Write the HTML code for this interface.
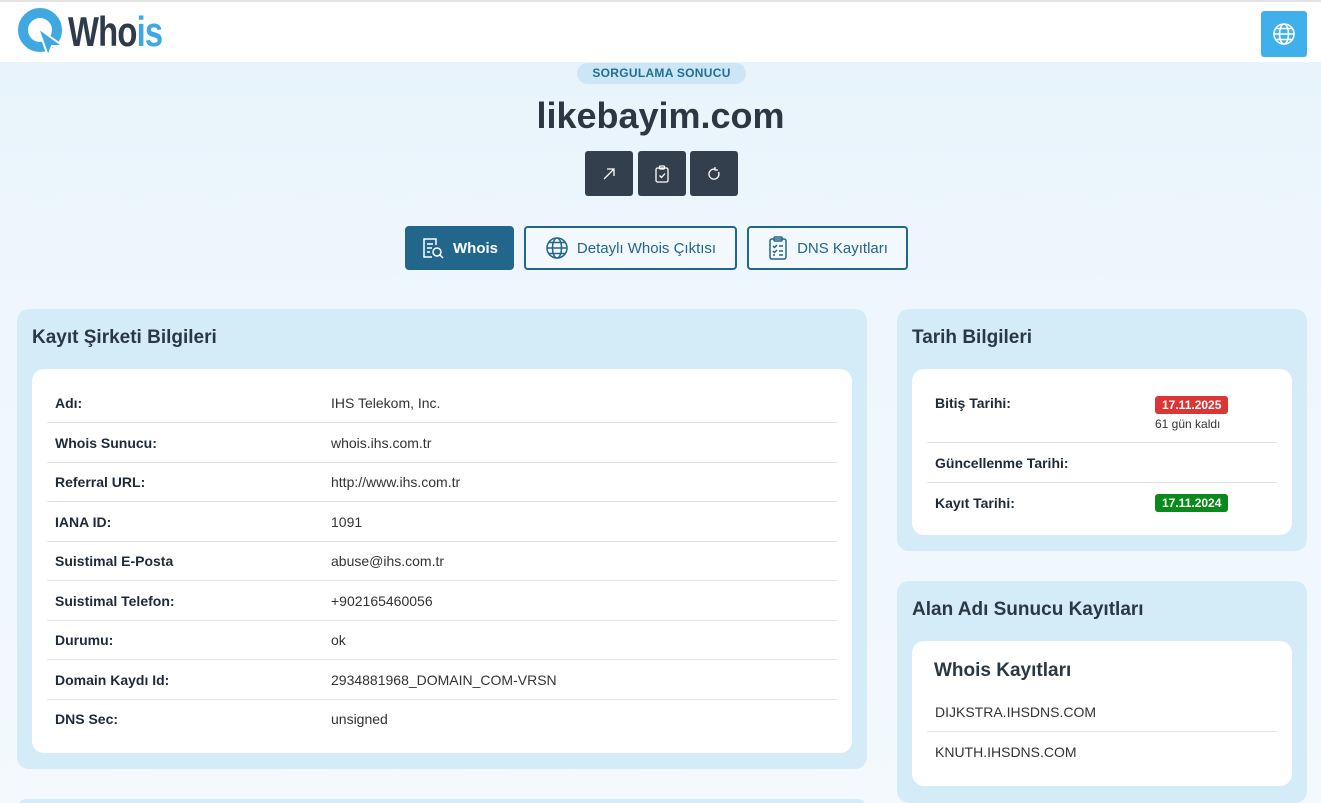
<!DOCTYPE html>
<html><head><meta charset="utf-8"><style>
*{margin:0;padding:0;box-sizing:border-box}
html{height:803px;overflow:hidden}
body{width:1321px;height:803px;overflow:hidden;font-family:"Liberation Sans",sans-serif;background:linear-gradient(180deg,#e6f2fa 0,#eef7fd 300px,#f3f9fd 803px);position:relative;color:#1f2937}
.hdr{position:absolute;left:0;top:0;width:1321px;height:62px;background:#fff;border-top:2px solid #e3e3e3}
.logo{position:absolute;left:18px;top:6px}
.logo span{position:absolute;left:50px;top:0px;font-size:42px;font-weight:bold;letter-spacing:-1px;color:#2f3b4a;transform:scaleX(.78);transform-origin:left}
.gbtn{position:absolute;left:1261px;top:9px;width:46px;height:46px;background:#3fb0ea;border-radius:3px;display:flex;align-items:center;justify-content:center}
.badge{position:absolute;left:577px;top:63px;width:169px;height:21px;background:#cde6f5;border-radius:11px;font-size:12px;font-weight:bold;color:#1f6e94;text-align:center;line-height:21px;letter-spacing:.3px}
h1{position:absolute;left:0;width:1321px;top:95px;text-align:center;font-size:36px;font-weight:bold;color:#2c3744}
.ib{position:absolute;top:151px;width:48px;height:45px;background:#343f4d;border-radius:3px;display:flex;align-items:center;justify-content:center}
.tab{position:absolute;top:226px;height:44px;border:2px solid #22668c;border-radius:4px;display:flex;align-items:center;justify-content:center;gap:8px;font-size:15px;color:#22668c;background:#f2f8fd}
.tab.on{background:#22668c;color:#fff;font-weight:bold}
.panel{position:absolute;background:#d4ebf8;border-radius:12px}
.panel h2{position:absolute;left:15px;top:18px;font-size:19px;font-weight:bold;color:#2c3744}
.card{position:absolute;background:#fff;border-radius:12px}
.row{position:absolute;left:15px;right:15px;height:40px;border-bottom:1px solid #dfe3e8;font-size:14px}
.row b{position:absolute;left:8px;top:12px;color:#1f2937}
.row i{position:absolute;left:284px;top:12px;font-style:normal;color:#333}
.tag{display:inline-block;color:#fff;font-weight:bold;font-size:12px;padding:2px 7px;border-radius:3px}
</style></head><body>
<div class="hdr">
 <div class="logo">
  <svg width="50" height="50" viewBox="0 0 50 50"><circle cx="22" cy="22" r="17" fill="none" stroke="#3fa8e0" stroke-width="10"/><path d="M20 20 L45 38 L34 38 L30 48 Z" fill="#3fa8e0" stroke="#fff" stroke-width="2"/></svg>
  <span>Who<em style="color:#3fa8e0;font-style:normal">is</em></span>
 </div>
 <div class="gbtn"><svg width="24" height="24" viewBox="0 0 24 24" fill="none" stroke="#fff" stroke-width="1.6"><circle cx="12" cy="12" r="10"/><ellipse cx="12" cy="12" rx="4.5" ry="10"/><path d="M2 12h20M4 6.5h16M4 17.5h16"/></svg></div>
</div>
<div class="badge">SORGULAMA SONUCU</div>
<h1>likebayim.com</h1>
<div class="ib" style="left:585px"><svg width="16" height="16" viewBox="0 0 16 16" fill="none" stroke="#fff" stroke-width="1.3"><path d="M3 13L13 3M6 3h7v7"/></svg></div>
<div class="ib" style="left:638px"><svg width="16" height="18" viewBox="0 0 16 18" fill="none" stroke="#fff" stroke-width="1.3"><rect x="2" y="3" width="12" height="14" rx="1.5"/><rect x="5.5" y="1" width="5" height="3" rx="1"/><path d="M5.5 10.5l2 2 3.5-4"/></svg></div>
<div class="ib" style="left:690px"><svg width="16" height="16" viewBox="0 0 16 16" fill="none" stroke="#fff" stroke-width="1.3"><path d="M12.5 6A5 5 0 1 1 9 3.2"/><path d="M9 1v3h3"/></svg></div>
<div class="tab on" style="left:405px;width:109px"><svg width="24" height="24" viewBox="0 0 24 24" fill="none" stroke="#fff" stroke-width="1.5"><path d="M15 9V3H3v18h8"/><path d="M6 8h6M6 12h5M6 16h3"/><circle cx="16" cy="16" r="4"/><path d="M19 19l3 3"/></svg>Whois</div>
<div class="tab" style="left:524px;width:213px"><svg width="24" height="24" viewBox="0 0 24 24" fill="none" stroke="#22668c" stroke-width="1.5"><circle cx="12" cy="12" r="10"/><ellipse cx="12" cy="12" rx="4.5" ry="10"/><path d="M2 12h20M4 6.5h16M4 17.5h16"/></svg>Detaylı Whois Çıktısı</div>
<div class="tab" style="left:747px;width:161px"><svg width="22" height="24" viewBox="0 0 22 24" fill="none" stroke="#22668c" stroke-width="1.5"><rect x="3" y="3" width="16" height="20" rx="2"/><rect x="7" y="1" width="8" height="4" rx="1"/><path d="M6 10l1.5 1.5L10 9M12 10h4M6 15l1.5 1.5L10 14M12 15h4M6 19h2M12 19h4"/></svg>DNS Kayıtları</div>

<div class="panel" style="left:17px;top:309px;width:850px;height:460px"><h2>Kayıt Şirketi Bilgileri</h2>
 <div class="card" style="left:15px;top:60px;width:820px;height:384px">
  <div class="row" style="top:14px"><b>Adı:</b><i>IHS Telekom, Inc.</i></div>
  <div class="row" style="top:54px"><b>Whois Sunucu:</b><i>whois.ihs.com.tr</i></div>
  <div class="row" style="top:93px"><b>Referral URL:</b><i>http://www.ihs.com.tr</i></div>
  <div class="row" style="top:133px"><b>IANA ID:</b><i>1091</i></div>
  <div class="row" style="top:172px"><b>Suistimal E-Posta</b><i>abuse@ihs.com.tr</i></div>
  <div class="row" style="top:212px"><b>Suistimal Telefon:</b><i>+902165460056</i></div>
  <div class="row" style="top:251px"><b>Durumu:</b><i>ok</i></div>
  <div class="row" style="top:291px"><b>Domain Kaydı Id:</b><i>2934881968_DOMAIN_COM-VRSN</i></div>
  <div class="row" style="top:330px;border:0"><b>DNS Sec:</b><i>unsigned</i></div>
 </div>
</div>
<div class="panel" style="left:17px;top:799px;width:850px;height:20px"></div>

<div class="panel" style="left:897px;top:309px;width:410px;height:242px"><h2>Tarih Bilgileri</h2>
 <div class="card" style="left:15px;top:60px;width:380px;height:166px">
  <div class="row" style="top:14px;height:60px"><b>Bitiş Tarihi:</b><i style="left:228px;top:13px"><span class="tag" style="background:#dc3535">17.11.2025</span><br><span style="font-size:12px;line-height:20px">61 gün kaldı</span></i></div>
  <div class="row" style="top:74px"><b>Güncellenme Tarihi:</b></div>
  <div class="row" style="top:114px;border:0"><b>Kayıt Tarihi:</b><i style="left:228px;top:11px"><span class="tag" style="background:#0a8a1a">17.11.2024</span></i></div>
 </div>
</div>
<div class="panel" style="left:897px;top:581px;width:410px;height:222px"><h2>Alan Adı Sunucu Kayıtları</h2>
 <div class="card" style="left:15px;top:60px;width:380px;height:145px">
  <div style="position:absolute;left:22px;top:19px;font-size:19px;font-weight:bold;color:#2c3744">Whois Kayıtları</div>
  <div class="row" style="top:51px"><i style="left:8px;top:12px">DIJKSTRA.IHSDNS.COM</i></div>
  <div class="row" style="top:91px;border:0"><i style="left:8px;top:12px">KNUTH.IHSDNS.COM</i></div>
 </div>
</div>
</body></html>
